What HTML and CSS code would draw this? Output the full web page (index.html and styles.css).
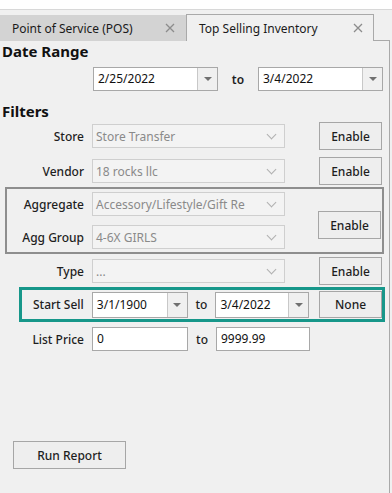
FILE: index.html
```html
<!DOCTYPE html>
<html>
<head>
<meta charset="utf-8">
<link rel="stylesheet" href="styles.css">
</head>
<body>
<div class="topstrip"></div>
<div class="tabbar">
  <div class="tab tab-off"><span class="tab-text">Point of Service (POS)</span><svg class="tab-x" width="10" height="10" viewBox="0 0 10 10"><path d="M1 1L9 9M9 1L1 9" stroke="#8c8c8c" stroke-width="1.3" fill="none"/></svg></div>
  <div class="tab tab-on"><span class="tab-text">Top Selling Inventory</span><svg class="tab-x" width="10" height="10" viewBox="0 0 10 10"><path d="M1 1L9 9M9 1L1 9" stroke="#8c8c8c" stroke-width="1.3" fill="none"/></svg></div>
  <div class="tab-fill"></div>
</div>
<div class="panel">
  <div class="heading">Date Range</div>
  <div class="daterow">
    <div class="date w125"><span class="dval">2/25/2022</span><span class="ddrop"><span class="tri"></span></span></div>
    <span class="to to-date">to</span>
    <div class="date w125"><span class="dval">3/4/2022</span><span class="ddrop"><span class="tri"></span></span></div>
  </div>
  <div class="heading heading-filters">Filters</div>

  <div class="row row-store">
    <span class="lbl">Store</span>
    <div class="combo"><span class="cval">Store Transfer</span><span class="chev"></span></div>
    <button class="btn">Enable</button>
  </div>
  <div class="row row-vendor">
    <span class="lbl">Vendor</span>
    <div class="combo"><span class="cval">18 rocks llc</span><span class="chev"></span></div>
    <button class="btn">Enable</button>
  </div>

  <div class="aggbox">
    <div class="aggcol">
      <div class="aggrow">
        <span class="lbl lbl-agg">Aggregate</span>
        <div class="combo"><span class="cval">Accessory/Lifestyle/Gift Re</span><span class="chev"></span></div>
      </div>
      <div class="aggrow">
        <span class="lbl lbl-agg">Agg Group</span>
        <div class="combo"><span class="cval">4-6X GIRLS</span><span class="chev"></span></div>
      </div>
    </div>
    <button class="btn btn-agg">Enable</button>
  </div>

  <div class="row row-type">
    <span class="lbl">Type</span>
    <div class="combo"><span class="cval">...</span><span class="chev"></span></div>
    <button class="btn">Enable</button>
  </div>

  <div class="sellbox">
    <span class="lbl lbl-sell">Start Sell</span>
    <div class="date date-sell w96"><span class="dval">3/1/1900</span><span class="ddrop"><span class="tri"></span></span></div>
    <span class="to">to</span>
    <div class="date date-sell w94"><span class="dval">3/4/2022</span><span class="ddrop"><span class="tri"></span></span></div>
    <button class="btn btn-none">None</button>
  </div>

  <div class="row row-price">
    <span class="lbl">List Price</span>
    <div class="txt w96">0</div>
    <span class="to">to</span>
    <div class="txt w94">9999.99</div>
  </div>

  <div class="runwrap">
    <button class="btn btn-run">Run Report</button>
  </div>
</div>
</body>
</html>
```

FILE: styles.css
```css
* { box-sizing: border-box; }
html, body {
  margin: 0;
  padding: 0;
  background: #f0f0f0;
  font-family: "Noto Sans", "Open Sans", sans-serif;
  font-size: 12px;
  color: #1e1e1e;
  width: 392px;
  height: 493px;
  overflow: hidden;
}
.topstrip {
  height: 10px;
  background: #ffffff;
  border-bottom: 1px solid #d8d8d8;
}
.tabbar {
  display: flex;
  align-items: flex-end;
  height: 31px;
  width: 390px;
}
.tab {
  display: flex;
  align-items: center;
  font-size: 12px;
  color: #1a1a1a;
}
.tab-off {
  width: 186px;
  height: 26px;
  background: #d3d3d3;
  padding-left: 12px;
}
.tab-on {
  width: 188px;
  height: 27px;
  background: #f0f0f0;
  border: 1px solid #a9a9a9;
  border-bottom: none;
  padding-left: 12px;
}
.tab-text { width: 153px; }
.tab-on .tab-text { width: 154px; }
.tab-x { display: block; }
.tab-fill {
  flex: 1;
  height: 1px;
  border-bottom: 1px solid #a9a9a9;
  border-right: 1px solid #a9a9a9;
}
.panel {
  width: 390px;
  height: 452px;
  border-right: 1px solid #a9a9a9;
}
.heading {
  font-weight: 700;
  font-size: 15px;
  line-height: 20px;
  padding-left: 2px;
  color: #111;
}
.heading-filters { margin-top: 10px; }
.daterow {
  display: flex;
  align-items: center;
  margin-top: 6px;
  padding-left: 93px;
  height: 24px;
}
.date {
  display: flex;
  height: 24px;
  background: #fff;
  border: 1px solid #a8a8a8;
}
.dval {
  flex: 1;
  padding-left: 4px;
  line-height: 22px;
  font-size: 12px;
  color: #111;
}
.ddrop {
  width: 20px;
  border-left: 1px solid #c8c8c8;
  background: #f0f0f0;
  display: flex;
  align-items: center;
  justify-content: center;
}
.tri {
  width: 0;
  height: 0;
  border-left: 4px solid transparent;
  border-right: 4px solid transparent;
  border-top: 4px solid #707070;
}
.w125 { width: 125px; }
.w96 { width: 96px; }
.w94 { width: 94px; }
.to {
  font-weight: 500;
  width: 28px;
  text-align: center;
  font-size: 12px;
}
.to-date { width: 40px; font-weight: 600; }
.row {
  display: flex;
  align-items: center;
  height: 28px;
}
.row-store { margin-top: 1px; }
.row-vendor { margin-top: 7px; }
.row-type { margin-top: 3px; }
.row-price { margin-top: 5px; height: 24px; }
.lbl {
  width: 84px;
  text-align: right;
  font-weight: 500;
  margin-right: 8px;
  color: #1e1e1e;
}
.combo {
  width: 193px;
  height: 24px;
  border: 1px solid #cfcfcf;
  background: #f3f3f3;
  display: flex;
  align-items: center;
  margin-right: 34px;
}
.cval {
  flex: 1;
  padding-left: 3px;
  color: #8a8a8a;
  white-space: nowrap;
  overflow: hidden;
}
.chev {
  width: 7px;
  height: 7px;
  border-right: 1px solid #b0b0b0;
  border-bottom: 1px solid #b0b0b0;
  transform: rotate(45deg);
  margin: 0 9px 4px 4px;
}
.btn {
  width: 63px;
  height: 28px;
  border: 1px solid #a6a6a6;
  background: #eeeeee;
  font-family: "Noto Sans", "Open Sans", sans-serif;
  font-size: 12px;
  font-weight: 500;
  color: #1e1e1e;
  padding: 0;
}
.aggbox {
  display: flex;
  margin-top: 2px;
  margin-left: 5px;
  width: 379px;
  height: 67px;
  border: 2px solid #8e8e8e;
}
.aggcol {
  display: flex;
  flex-direction: column;
  padding-top: 3px;
  gap: 9px;
}
.aggrow {
  display: flex;
  align-items: center;
}
.lbl-agg { width: 77px; }
.aggrow .combo { margin-right: 33px; }
.btn-agg { margin-top: 22px; }
.sellbox {
  display: flex;
  align-items: center;
  margin-top: 2px;
  margin-left: 19px;
  width: 366px;
  height: 35px;
  border: 3px solid #17978a;
}
.lbl-sell { width: 62px; margin-right: 8px; }
.date-sell { height: 26px; }
.date-sell .dval { line-height: 24px; }
.btn-none { margin-left: 10px; height: 27px; }
.txt {
  height: 24px;
  background: #fff;
  border: 1px solid #a8a8a8;
  padding-left: 4px;
  line-height: 22px;
  color: #111;
}
.runwrap {
  margin-top: 90px;
  padding-left: 13px;
}
.btn-run {
  width: 113px;
  height: 28px;
}
```
